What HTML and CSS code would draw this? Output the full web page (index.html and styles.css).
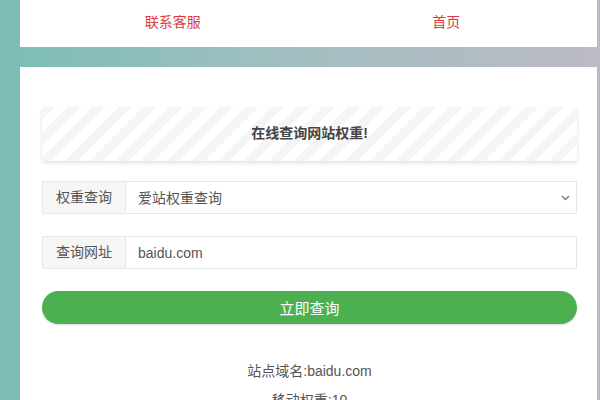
FILE: index.html
```html
<!DOCTYPE html>
<html lang="zh-CN">
<head>
    <meta charset="UTF-8">
    <meta name="viewport" content="width=device-width, initial-scale=1.0">
    <title>网站权重查询</title>
    <link rel="stylesheet" href="styles.css">
</head>
<body>
    <nav class="topnav">
        <a href="#kefu">联系客服</a>
        <a href="#home">首页</a>
    </nav>

    <main class="panel">
        <div class="banner">在线查询网站权重!</div>

        <div class="field">
            <span class="addon">权重查询</span>
            <div class="select-wrap">
                <select class="control">
                    <option>爱站权重查询</option>
                    <option>站长权重查询</option>
                </select>
                <svg class="chevron" width="9" height="6" viewBox="0 0 9 6">
                    <path d="M1 1l3.5 3.5L8 1" fill="none" stroke="#777" stroke-width="1.4"/>
                </svg>
            </div>
        </div>

        <div class="field">
            <span class="addon">查询网址</span>
            <input class="control" type="text" value="baidu.com">
        </div>

        <button class="btn-query">立即查询</button>

        <div class="result">
            <p>站点域名:baidu.com</p>
            <p>移动权重:10</p>
        </div>
    </main>
</body>
</html>
```

FILE: styles.css
```css
body {
    margin: 0;
    padding: 0 3px 0 20px;
    height: 400px;
    overflow: hidden;
    font-family: 'Liberation Sans', 'Noto Sans CJK SC', sans-serif;
    font-size: 14px;
    color: #555;
    background: linear-gradient(to right, #7bbdb4 0%, #a0bfc0 45%, #bcbac5 100%);
}

.topnav {
    background-color: #fff;
    height: 47px;
    box-sizing: border-box;
    display: grid;
    grid-template-columns: 1fr 1fr;
    align-items: center;
    padding: 0 14px 5px 16px;
    margin-bottom: 20px;
}

.topnav a {
    text-align: center;
    color: #dc3a40;
    font-size: 14px;
    text-decoration: none;
}

.panel {
    background-color: #fff;
    padding: 40px 20px 20px 22px;
    min-height: 400px;
}

.banner {
    height: 54px;
    line-height: 53px;
    text-align: center;
    font-weight: bold;
    color: #444;
    background: repeating-linear-gradient(135deg, #f5f5f5 0, #f5f5f5 9px, #fff 9px, #fff 18px);
    box-shadow: 0 2px 4px rgba(0,0,0,0.12);
    border-radius: 3px;
    margin-bottom: 20px;
}

.field {
    display: flex;
    height: 33px;
    box-sizing: border-box;
    border: 1px solid #e8e8e8;
    margin-bottom: 22px;
}

.addon {
    width: 82px;
    flex: none;
    background-color: #f6f6f6;
    border-right: 1px solid #e8e8e8;
    text-align: center;
    line-height: 31px;
    color: #555;
}

.select-wrap {
    flex: 1;
    position: relative;
    display: flex;
}

.control {
    flex: 1;
    border: 0;
    outline: none;
    background: #fff;
    padding: 0 12px;
    font-family: inherit;
    font-size: 14px;
    color: #555;
    appearance: none;
    -webkit-appearance: none;
}

.chevron {
    position: absolute;
    right: 6px;
    top: 13px;
}

.btn-query {
    display: block;
    width: 100%;
    height: 33px;
    border: 0;
    border-radius: 17px;
    background-color: #4caf50;
    color: #fff;
    font-family: inherit;
    font-size: 15px;
    box-shadow: 0 1px 2px rgba(0,0,0,0.15);
}

.result {
    margin-top: 33px;
    text-align: center;
}

.result p {
    margin: 0;
    line-height: 29px;
}
```
